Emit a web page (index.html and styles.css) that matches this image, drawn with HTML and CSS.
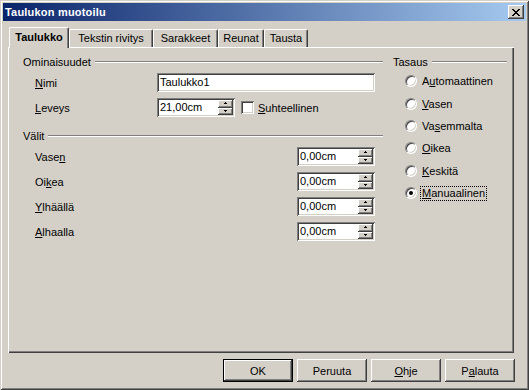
FILE: index.html
```html
<!DOCTYPE html>
<html lang="fi">
<head>
<meta charset="utf-8">
<title>Taulukon muotoilu</title>
<link rel="stylesheet" href="styles.css">
</head>
<body>
<div class="window">
  <div class="titlebar">
    <span class="title">Taulukon muotoilu</span>
    <div class="close">
      <svg width="8" height="7" viewBox="0 0 8 7" shape-rendering="crispEdges"><path d="M0 0h2v1H0zM6 0h2v1H6zM1 1h2v1H1zM5 1h2v1H5zM2 2h4v1H2zM3 3h2v1H3zM2 4h4v1H2zM1 5h2v1H1zM5 5h2v1H5zM0 6h2v1H0zM6 6h2v1H6z" fill="#000"/></svg>
    </div>
  </div>

  <div class="tabs">
    <div class="tab active tab-taulukko">Taulukko</div>
    <div class="tab tab-rivitys">Tekstin rivitys</div>
    <div class="tab tab-sarakkeet">Sarakkeet</div>
    <div class="tab tab-reunat">Reunat</div>
    <div class="tab tab-tausta">Tausta</div>
  </div>

  <div class="panel">
    <div class="col-left">
      <div class="group-head"><span>Ominaisuudet</span><i class="rule"></i></div>
      <div class="props">
        <div class="prop-row">
          <span class="lbl"><u>N</u>imi</span>
          <div class="field field-name">Taulukko1</div>
        </div>
        <div class="prop-row">
          <span class="lbl"><u>L</u>eveys</span>
          <div class="inline">
            <div class="field spin">
              <span class="val">21,00cm</span>
              <span class="spin-btns">
                <span class="sbtn"><svg width="5" height="3" viewBox="0 0 5 3" shape-rendering="crispEdges"><path d="M2 0h1v1H2zM1 1h3v1H1z" fill="#000"/></svg></span>
                <span class="sbtn"><svg width="5" height="3" viewBox="0 0 5 3" shape-rendering="crispEdges"><path d="M1 0h3v1H1zM2 1h1v1H2z" fill="#000"/></svg></span>
              </span>
            </div>
            <span class="checkbox"></span>
            <span class="check-lbl"><u>S</u>uhteellinen</span>
          </div>
        </div>
      </div>

      <div class="group-head group-valit"><span>Välit</span><i class="rule"></i></div>
      <div class="spacing">
        <div class="sp-row">
          <span class="lbl">Vase<u>n</u></span>
          <div class="field spin">
            <span class="val">0,00cm</span>
            <span class="spin-btns">
              <span class="sbtn"><svg width="5" height="3" viewBox="0 0 5 3" shape-rendering="crispEdges"><path d="M2 0h1v1H2zM1 1h3v1H1z" fill="#000"/></svg></span>
              <span class="sbtn"><svg width="5" height="3" viewBox="0 0 5 3" shape-rendering="crispEdges"><path d="M1 0h3v1H1zM2 1h1v1H2z" fill="#000"/></svg></span>
            </span>
          </div>
        </div>
        <div class="sp-row">
          <span class="lbl">Oi<u>k</u>ea</span>
          <div class="field spin">
            <span class="val">0,00cm</span>
            <span class="spin-btns">
              <span class="sbtn"><svg width="5" height="3" viewBox="0 0 5 3" shape-rendering="crispEdges"><path d="M2 0h1v1H2zM1 1h3v1H1z" fill="#000"/></svg></span>
              <span class="sbtn"><svg width="5" height="3" viewBox="0 0 5 3" shape-rendering="crispEdges"><path d="M1 0h3v1H1zM2 1h1v1H2z" fill="#000"/></svg></span>
            </span>
          </div>
        </div>
        <div class="sp-row">
          <span class="lbl"><u>Y</u>lhäällä</span>
          <div class="field spin">
            <span class="val">0,00cm</span>
            <span class="spin-btns">
              <span class="sbtn"><svg width="5" height="3" viewBox="0 0 5 3" shape-rendering="crispEdges"><path d="M2 0h1v1H2zM1 1h3v1H1z" fill="#000"/></svg></span>
              <span class="sbtn"><svg width="5" height="3" viewBox="0 0 5 3" shape-rendering="crispEdges"><path d="M1 0h3v1H1zM2 1h1v1H2z" fill="#000"/></svg></span>
            </span>
          </div>
        </div>
        <div class="sp-row">
          <span class="lbl"><u>A</u>lhaalla</span>
          <div class="field spin">
            <span class="val">0,00cm</span>
            <span class="spin-btns">
              <span class="sbtn"><svg width="5" height="3" viewBox="0 0 5 3" shape-rendering="crispEdges"><path d="M2 0h1v1H2zM1 1h3v1H1z" fill="#000"/></svg></span>
              <span class="sbtn"><svg width="5" height="3" viewBox="0 0 5 3" shape-rendering="crispEdges"><path d="M1 0h3v1H1zM2 1h1v1H2z" fill="#000"/></svg></span>
            </span>
          </div>
        </div>
      </div>
    </div>

    <div class="col-right">
      <div class="group-head"><span>Tasaus</span><i class="rule"></i></div>
      <div class="radios">
        <div class="radio-row"><span class="radio"></span><span>A<u>u</u>tomaattinen</span></div>
        <div class="radio-row"><span class="radio"></span><span><u>V</u>asen</span></div>
        <div class="radio-row"><span class="radio"></span><span>Va<u>s</u>emmalta</span></div>
        <div class="radio-row"><span class="radio"></span><span><u>O</u>ikea</span></div>
        <div class="radio-row"><span class="radio"></span><span><u>K</u>eskitä</span></div>
        <div class="radio-row"><span class="radio checked"></span><span class="focus"><u>M</u>anuaalinen</span></div>
      </div>
    </div>
  </div>

  <div class="buttons">
    <div class="btn default">OK</div>
    <div class="btn">Peruuta</div>
    <div class="btn"><u>O</u>hje</div>
    <div class="btn">P<u>a</u>lauta</div>
  </div>
</div>
</body>
</html>
```

FILE: styles.css
```css
html, body {
  margin: 0;
  padding: 0;
}

body {
  background: #D4D0C8;
  font-family: "Liberation Sans", Arial, sans-serif;
  font-size: 11px;
  color: #000;
}

u {
  text-decoration: underline;
  text-underline-offset: 1px;
}

.window {
  width: 529px;
  height: 390px;
  box-sizing: border-box;
  padding: 3px;
  background: #D4D0C8;
  box-shadow: inset 1px 1px #D4D0C8, inset -1px -1px #404040,
              inset 2px 2px #FFFFFF, inset -2px -2px #808080;
  display: flex;
  flex-direction: column;
}

/* Title bar */
.titlebar {
  height: 18px;
  display: flex;
  align-items: center;
  justify-content: space-between;
  padding: 0 2px;
  background: linear-gradient(to right, #0A246A, #A6CAF0);
  color: #fff;
}

.title {
  font-weight: bold;
  font-size: 11px;
  letter-spacing: 0.2px;
}

.close {
  width: 16px;
  height: 14px;
  box-sizing: border-box;
  background: #D4D0C8;
  box-shadow: inset -1px -1px #404040, inset 1px 1px #FFFFFF, inset -2px -2px #808080;
  display: flex;
  align-items: center;
  justify-content: center;
  padding-right: 1px;
}

.close svg {
  display: block;
}

/* Tabs */
.tabs {
  display: flex;
  align-items: flex-end;
  height: 20px;
  margin: 6px 0 0 6px;
  position: relative;
  z-index: 1;
}

.tab {
  height: 18px;
  box-sizing: border-box;
  border-top: 1px solid #FFFFFF;
  border-left: 1px solid #FFFFFF;
  border-right: 1px solid #404040;
  border-radius: 2px 2px 0 0;
  box-shadow: inset -1px 0 #808080;
  background: #D4D0C8;
  text-align: center;
  line-height: 17px;
}

.tab.active {
  height: 21px;
  margin-bottom: -1px;
  font-weight: bold;
  line-height: 19px;
  padding-bottom: 2px;
}

.tab-taulukko { width: 60px; }
.tab-rivitys { width: 84px; }
.tab-sarakkeet { width: 65px; }
.tab-reunat { width: 46px; }
.tab-tausta { width: 44px; }

/* Panel */
.panel {
  margin-left: 5px;
  width: 506px;
  height: 306px;
  box-sizing: border-box;
  padding: 8px 0 0 15px;
  box-shadow: inset 1px 1px #FFFFFF, inset -1px -1px #404040, inset -2px -2px #808080;
  display: grid;
  grid-template-columns: 360px 114px;
  column-gap: 10px;
  align-items: start;
}

.group-head {
  display: flex;
  align-items: center;
  height: 14px;
}

.group-head .rule {
  flex: 1;
  height: 0;
  border-top: 1px solid #808080;
  border-bottom: 1px solid #FFFFFF;
  margin-left: 4px;
}

.props {
  margin-top: 4px;
  display: flex;
  flex-direction: column;
  gap: 6px;
  padding: 0 8px 0 12px;
}

.prop-row {
  display: grid;
  grid-template-columns: 122px 218px;
  align-items: center;
  height: 19px;
}

.inline {
  display: flex;
  align-items: center;
}

.field {
  height: 19px;
  box-sizing: border-box;
  background: #FFFFFF;
  box-shadow: inset 1px 1px #808080, inset -1px -1px #FFFFFF,
              inset 2px 2px #404040, inset -2px -2px #D4D0C8;
  padding: 2px 2px 2px 3px;
  line-height: 15px;
}

.field-name {
  width: 218px;
}

.spin {
  width: 78px;
  display: flex;
}

.spin .val {
  flex: 1;
}

.spin-btns {
  width: 15px;
  display: flex;
  flex-direction: column;
}

.sbtn {
  flex: 1;
  background: #D4D0C8;
  box-shadow: inset -1px -1px #404040, inset 1px 1px #FFFFFF, inset -2px -2px #808080;
  display: flex;
  align-items: center;
  justify-content: center;
  padding-right: 1px;
}

.sbtn svg {
  display: block;
}

.checkbox {
  width: 13px;
  height: 13px;
  box-sizing: border-box;
  margin-left: 6px;
  background: #FFFFFF;
  box-shadow: inset 1px 1px #808080, inset -1px -1px #FFFFFF,
              inset 2px 2px #404040, inset -2px -2px #D4D0C8;
}

.check-lbl {
  margin-left: 4px;
}

.group-valit {
  margin-top: 12px;
}

.spacing {
  margin-top: 4px;
  display: flex;
  flex-direction: column;
  gap: 6px;
  padding: 0 8px 0 12px;
}

.sp-row {
  display: flex;
  align-items: center;
  justify-content: space-between;
  height: 19px;
}

/* Radios */
.radios {
  margin-top: 1px;
  padding-left: 12px;
  display: grid;
  grid-auto-rows: 22.4px;
}

.radio-row {
  display: flex;
  align-items: center;
}

.radio {
  width: 12px;
  height: 12px;
  box-sizing: border-box;
  border-radius: 50%;
  border: 1px solid;
  border-color: #808080 #FFFFFF #FFFFFF #808080;
  background: #FFFFFF;
  box-shadow: inset 1px 1px #404040, inset -1px -1px #D4D0C8;
  margin-right: 5px;
  display: flex;
  align-items: center;
  justify-content: center;
}

.radio.checked::after {
  content: "";
  width: 4px;
  height: 4px;
  border-radius: 50%;
  background: #000;
}

.focus {
  outline: 1px dotted #000;
  outline-offset: 0;
  padding: 0 1px;
  margin-left: -1px;
  line-height: 13px;
}

/* Buttons */
.buttons {
  margin: 6px 0 0 5px;
  width: 507px;
  display: flex;
  justify-content: flex-end;
  gap: 4px;
}

.btn {
  width: 70px;
  height: 23px;
  box-sizing: border-box;
  background: #D4D0C8;
  box-shadow: inset -1px -1px #404040, inset 1px 1px #FFFFFF, inset -2px -2px #808080;
  display: flex;
  align-items: center;
  justify-content: center;
}

.btn.default {
  box-shadow: inset 0 0 0 1px #000, inset -2px -2px #404040, inset 2px 2px #FFFFFF, inset -3px -3px #808080;
}
```
